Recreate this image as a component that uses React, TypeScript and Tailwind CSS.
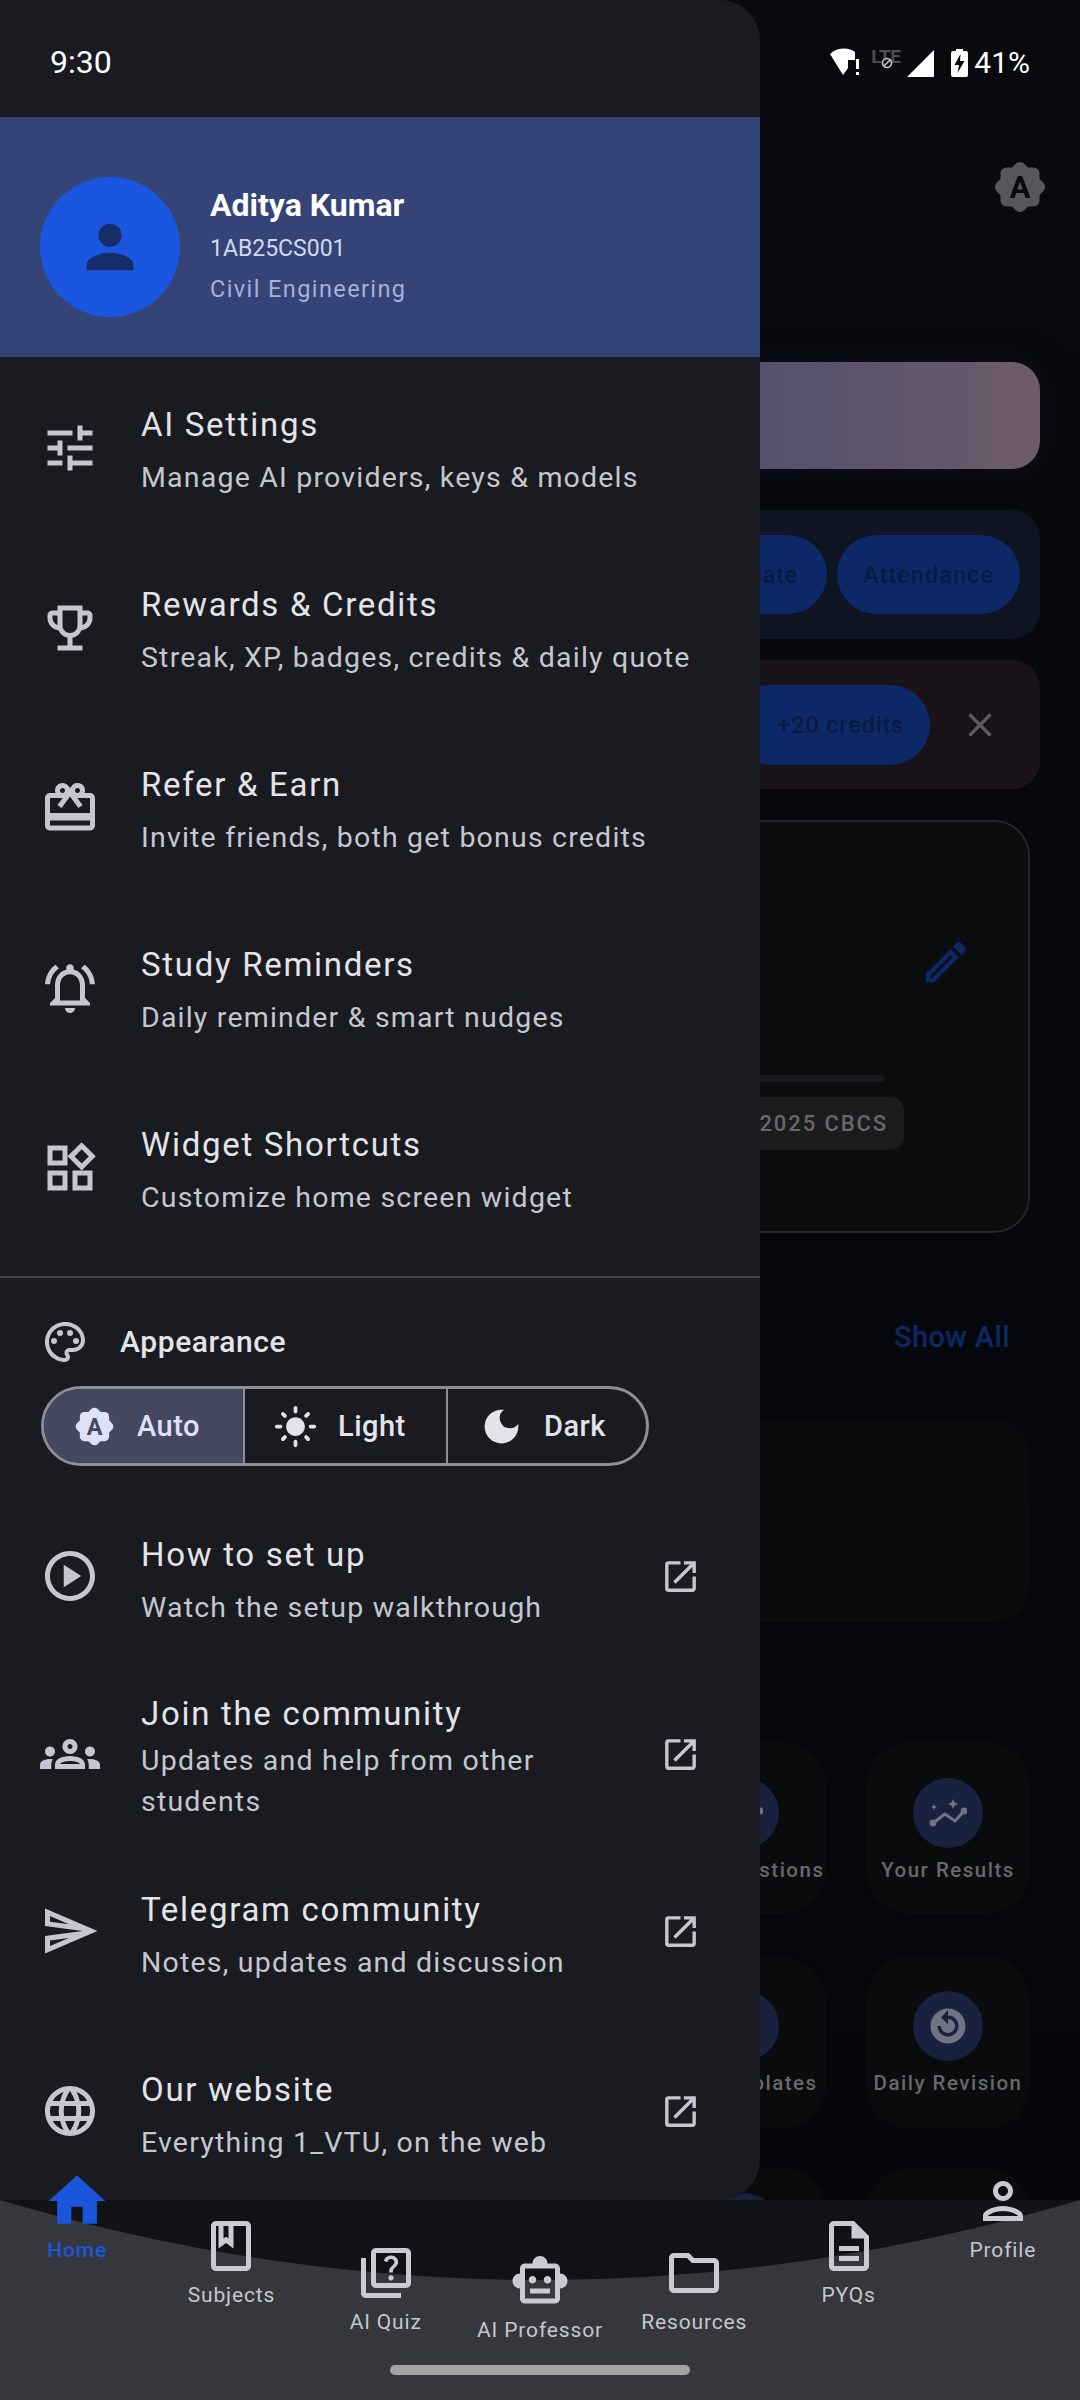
import React from "react";
import {
  MdTune, MdOutlineEmojiEvents, MdOutlineRedeem, MdOutlineNotificationsActive, MdOutlineWidgets,
  MdOutlinePalette, MdLightMode, MdDarkMode, MdOutlinePlayCircle, MdOutlineGroups,
  MdOutlineSend, MdLanguage, MdOpenInNew, MdPerson, MdHome, MdOutlineBook, MdOutlineQuiz,
  MdOutlineSmartToy, MdOutlineFolder, MdOutlineDescription, MdOutlinePerson,
  MdReplayCircleFilled, MdOutlineEdit, MdClose,
} from "react-icons/md";

type IconT = React.ComponentType<{ size?: number; className?: string }>;

function AutoBadge({ size, letter, className = "" }: { size: number; letter: string; className?: string }) {
  return (
    <svg width={size} height={size} viewBox="0 0 24 24" className={`shrink-0 ${className}`}>
      <rect x="4.2" y="4.2" width="15.6" height="15.6" rx="2.4" fill="currentColor" />
      <rect x="4.2" y="4.2" width="15.6" height="15.6" rx="2.4" fill="currentColor" transform="rotate(45 12 12)" />
      <text x="12" y="16.4" textAnchor="middle" fontSize="12.5" fontWeight="700" fontFamily="Roboto, sans-serif" fill={letter}>A</text>
    </svg>
  );
}

function ResultsGlyph() {
  return (
    <svg width="38" height="28" viewBox="0 0 38 28" className="text-[#6f7382]">
      <path d="M4 24 L16 15 L26 22 L35 12" fill="none" stroke="currentColor" strokeWidth="3" strokeLinejoin="round" />
      <circle cx="4" cy="24" r="3.4" fill="currentColor" />
      <circle cx="35" cy="12" r="3.4" fill="currentColor" />
      <path d="M24 0 L25.6 3.4 L29 5 L25.6 6.6 L24 10 L22.4 6.6 L19 5 L22.4 3.4 Z" fill="currentColor" />
      <path d="M5 5 L5.9 7.1 L8 8 L5.9 8.9 L5 11 L4.1 8.9 L2 8 L4.1 7.1 Z" fill="currentColor" />
    </svg>
  );
}

function Row({ icon: Icon, title, sub, h = "h-[180px]", ext, iconShift = "", gap = "mt-[8px]", textShift = "" }: { icon: IconT; title: string; sub: string; h?: string; ext?: boolean; iconShift?: string; gap?: string; textShift?: string }) {
  return (
    <div className={`flex shrink-0 items-center pl-[40px] ${h}`}>
      <Icon size={60} className={`shrink-0 text-[#c5c6d2] ${iconShift}`} />
      <div className={`ml-[41px] shrink-0 ${textShift} ${ext ? "w-[500px]" : "w-[600px]"}`}>
        <div className="text-[33px] leading-[48px] tracking-[1.7px] text-[#e3e3e9]">{title}</div>
        <div className={`text-[28.5px] leading-[41px] tracking-[1.2px] text-[#c5c6d0] ${gap}`}>{sub}</div>
      </div>
      {ext && <MdOpenInNew size={41} className={`ml-[19px] shrink-0 text-[#c5c6d2] ${iconShift}`} />}
    </div>
  );
}

function Seg({ icon, label, w, active, last, pl }: { icon: React.ReactNode; label: string; w: string; active?: boolean; last?: boolean; pl: string }) {
  return (
    <div className={`flex items-center gap-[20px] ${pl} ${w} ${active ? "bg-[#444960] text-[#dfe1f9]" : "text-[#e3e3ec]"} ${last ? "" : "border-r-[2px] border-[#8e8e94]"}`}>
      {icon}
      <span className="text-[29px] font-medium leading-[40px] tracking-[0.5px]">{label}</span>
    </div>
  );
}

function Tile({ icon, label, top = "pt-[36px]", className = "" }: { icon?: React.ReactNode; label?: string; top?: string; className?: string }) {
  return (
    <div className={`flex h-[172px] w-[164px] flex-col items-center rounded-[44px] bg-[#0a0b0d] ${top} ${className}`}>
      <div className="flex h-[70px] w-[70px] shrink-0 items-center justify-center rounded-full bg-[#18213d]">{icon}</div>
      {label && <div className="mt-[7px] whitespace-nowrap text-[20.5px] font-medium leading-[30px] tracking-[1.5px] text-[#68686b]">{label}</div>}
    </div>
  );
}

function NavItem({ icon: Icon, label, offset, active, size = 60 }: { icon: IconT; label: string; offset: string; active?: boolean; size?: number }) {
  return (
    <div className={`flex flex-col items-center ${offset}`}>
      <div className={`flex h-[60px] w-[60px] items-center justify-center ${active ? "text-[#1a56db]" : "text-[#c9cad6]"}`}>
        <Icon size={size} className="shrink-0" />
      </div>
      <div className={`mt-[4px] whitespace-nowrap text-[21px] leading-[30px] tracking-[0.85px] ${active ? "font-medium text-[#1a56db]" : "text-[#c5c6d0]"}`}>{label}</div>
    </div>
  );
}

function StatusIcons() {
  return (
    <div className="flex items-center">
      <svg width="30" height="30" viewBox="0 0 30 30">
        <path d="M0 6 C7 -1 19 -1 25 4 L25 12 L18 12 L18 20 L13 27 Z" fill="#fff" />
        <rect x="26" y="11" width="3" height="10" fill="#fff" />
        <rect x="26" y="24" width="3" height="3" fill="#fff" />
      </svg>
      <div className="relative mb-[12px] ml-[11px] h-[16px] w-[30px]">
        <span className="block text-[19px] font-bold leading-[16px] tracking-[-0.5px] text-[#4d4d4f]">LTE</span>
        <svg width="12" height="12" viewBox="0 0 12 12" className="absolute left-[10px] top-[8px]">
          <circle cx="6" cy="6" r="4.5" fill="#0a0b0e" stroke="#c9c9c9" strokeWidth="1.6" />
          <path d="M3 9 L9 3" stroke="#c9c9c9" strokeWidth="1.6" />
        </svg>
      </div>
      <svg width="27" height="27" viewBox="0 0 27 27" className="ml-[6px]">
        <path d="M27 0 V27 H0 Z" fill="#fff" />
      </svg>
      <svg width="17" height="28" viewBox="0 0 17 28" className="ml-[17px]">
        <path d="M5 0 H12 V2 H15 Q17 2 17 4 V26 Q17 28 15 28 H2 Q0 28 0 26 V4 Q0 2 2 2 H5 Z" fill="#fff" />
        <path d="M9.5 5 L3.5 16 H8 L6.5 24 L13.5 12 H9 Z" fill="#0a0b0e" />
      </svg>
      <span className="ml-[6px] text-[30px] leading-[36px] text-white">41%</span>
    </div>
  );
}

export default function App() {
  return (
    <div className="relative h-[2400px] w-[1080px] overflow-hidden bg-[#07080b] font-[Roboto,sans-serif]">
      <main className="relative h-[2200px] overflow-hidden">
        {/* dimmed page behind the drawer */}
        <div className="flex h-[2200px] flex-col bg-gradient-to-b from-[#090a0d] to-[#050609]">
          <div className="flex h-[362px] shrink-0 justify-end pr-[30px] pt-[157px]">
            <AutoBadge size={60} letter="#08090c" className="text-[#57575b]" />
          </div>
          <div className="mx-[40px] h-[107px] shrink-0 rounded-[28px] bg-gradient-to-r from-[#10306e] to-[#6d5b6b] shadow-[0_0_30px_rgba(20,30,70,0.35)]" />
          <div className="mx-[40px] mt-[41px] flex h-[129px] shrink-0 items-center justify-end gap-[10px] rounded-[28px] bg-[#0f1422] pr-[20px]">
            <div className="flex h-[79px] w-[220px] items-center justify-end rounded-full bg-[#0d2866] pr-[29px] text-[24px] font-medium tracking-[0.6px] text-[#0a1a42]">Update</div>
            <div className="flex h-[79px] w-[183px] items-center justify-center rounded-full bg-[#0d2866] text-[24px] font-medium tracking-[0.8px] text-[#0a1a42]">Attendance</div>
          </div>
          <div className="mx-[40px] mt-[21px] flex h-[129px] shrink-0 items-center justify-end rounded-[28px] bg-[#1a1219] pr-[40px]">
            <div className="flex h-[80px] w-[200px] items-center justify-end rounded-full bg-[#0d2866] pr-[26px] text-[24px] font-medium tracking-[0.6px] text-[#0a1a42]">+20 credits</div>
            <MdClose size={40} className="ml-[30px] text-[#5c5c60]" />
          </div>
          <div className="mx-[50px] mt-[31px] flex h-[413px] shrink-0 flex-col rounded-[36px] border-[2px] border-[#232427] bg-[#0b0c0e] pl-[300px]">
            <div className="mt-[113px] flex justify-end pr-[55px]">
              <MdOutlineEdit size={54} className="text-[#0d2866]" />
            </div>
            <div className="mt-[86px] h-[7px] w-[533px] rounded-full bg-[#17181b]" />
            <div className="mt-[15px] flex h-[53px] w-[552px] items-center justify-end rounded-[14px] bg-[#1a1b1d] pr-[16px] text-[22px] font-medium tracking-[1.9px] text-[#68686b]">2025 CBCS</div>
          </div>
          <div className="mt-[84px] flex h-[40px] shrink-0 justify-end pr-[70px] text-[29px] font-medium leading-[40px] tracking-[0.4px] text-[#0d2866]">Show All</div>
          <div className="mx-[50px] mt-[63px] h-[202px] shrink-0 rounded-[36px] bg-[#0a0b0d]" />
          <div className="mt-[120px] grid shrink-0 grid-cols-[164px_164px] justify-end gap-x-[40px] gap-y-[43px] pr-[50px]">
            <Tile icon={<ResultsGlyph />} label="Your Questions" />
            <Tile icon={<ResultsGlyph />} label="Your Results" />
            <Tile icon={<MdOutlineDescription size={42} className="text-[#6f7382]" />} label="My Templates" top="pt-[34px]" />
            <Tile icon={<MdReplayCircleFilled size={42} className="text-[#6f7382]" />} label="Daily Revision" top="pt-[34px]" />
            <Tile top="pt-[25px]" className="-mt-[4px]" />
            <Tile top="pt-[44px]" className="-mt-[4px]" />
          </div>
        </div>

        {/* navigation drawer */}
        <aside className="absolute left-0 top-0 flex h-[2200px] w-[760px] flex-col overflow-hidden rounded-r-[40px] bg-[#1a1b21]">
          <div className="flex h-[117px] shrink-0 items-center pl-[50px] pt-[7px] text-[32px] leading-[36px] text-white">9:30</div>
          <div className="flex h-[240px] shrink-0 items-center bg-[#354477] pl-[40px] pt-[20px]">
            <div className="flex h-[140px] w-[140px] shrink-0 items-center justify-center rounded-full bg-[#1a56e0]">
              <MdPerson size={70} className="text-[#172c68]" />
            </div>
            <div className="-mt-[3px] ml-[30px]">
              <div className="text-[32px] font-bold leading-[40px] text-white">Aditya Kumar</div>
              <div className="mt-[6px] text-[23px] leading-[36px] text-[#d3d8f0]">1AB25CS001</div>
              <div className="mt-[4px] text-[23.5px] leading-[36px] tracking-[1.4px] text-[#a7b0dc]">Civil Engineering</div>
            </div>
          </div>
          <div className="h-[1px] shrink-0" />
          <Row icon={MdTune} title="AI Settings" sub="Manage AI providers, keys & models" textShift="mt-[3px]" />
          <Row icon={MdOutlineEmojiEvents} title="Rewards & Credits" sub="Streak, XP, badges, credits & daily quote" textShift="mt-[3px]" />
          <Row icon={MdOutlineRedeem} title="Refer & Earn" sub="Invite friends, both get bonus credits" textShift="mt-[3px]" />
          <Row icon={MdOutlineNotificationsActive} title="Study Reminders" sub="Daily reminder & smart nudges" textShift="mt-[3px]" />
          <Row icon={MdOutlineWidgets} title="Widget Shortcuts" sub="Customize home screen widget" textShift="mt-[3px]" />
          <div className="mt-[18px] h-[2px] shrink-0 bg-[#44454c]" />
          <div className="mt-[40px] flex h-[48px] shrink-0 items-center pl-[41px]">
            <MdOutlinePalette size={48} className="text-[#c5c6d2]" />
            <span className="ml-[31px] text-[30px] font-medium leading-[40px] tracking-[0.6px] text-[#e3e3e9]">Appearance</span>
          </div>
          <div className="ml-[41px] mt-[20px] flex h-[80px] w-[608px] shrink-0 overflow-hidden rounded-full border-[3px] border-[#8e8e94]">
            <Seg icon={<AutoBadge size={45} letter="#444960" />} label="Auto" w="w-[201px]" pl="pl-[28px]" active />
            <Seg icon={<MdLightMode size={45} className="shrink-0" />} label="Light" w="w-[203px]" pl="pl-[28px]" />
            <Seg icon={<MdDarkMode size={45} className="shrink-0" />} label="Dark" w="flex-1" pl="pl-[31px]" last />
          </div>
          <div className="h-[28px] shrink-0" />
          <Row icon={MdOutlinePlayCircle} title="How to set up" sub="Watch the setup walkthrough" h="h-[170px]" ext iconShift="-mt-[6px]" />
          <Row icon={MdOutlineGroups} title="Join the community" sub="Updates and help from other students" h="h-[180px]" ext gap="mt-[2px]" textShift="mt-[3px]" />
          <Row icon={MdOutlineSend} title="Telegram community" sub="Notes, updates and discussion" h="h-[180px]" ext iconShift="-mt-[6px]" />
          <Row icon={MdLanguage} title="Our website" sub="Everything 1_VTU, on the web" h="h-[180px]" ext iconShift="-mt-[6px]" />
        </aside>

        <div className="absolute right-[50px] top-[45px]">
          <StatusIcons />
        </div>
      </main>

      {/* bottom navigation */}
      <nav className="relative h-[200px] bg-[#111216]">
        <svg width="1080" height="200" viewBox="0 0 1080 200" className="absolute inset-0">
          <path d="M0 0 Q540 160 1080 0 L1080 200 L0 200 Z" fill="#36363d" />
        </svg>
        <div className="relative grid grid-cols-7">
          <NavItem icon={MdHome} label="Home" offset="-mt-[29px]" active size={68} />
          <NavItem icon={MdOutlineBook} label="Subjects" offset="mt-[16px]" />
          <NavItem icon={MdOutlineQuiz} label="AI Quiz" offset="mt-[43px]" />
          <NavItem icon={MdOutlineSmartToy} label="AI Professor" offset="mt-[51px]" />
          <NavItem icon={MdOutlineFolder} label="Resources" offset="mt-[43px]" />
          <NavItem icon={MdOutlineDescription} label="PYQs" offset="mt-[16px]" />
          <NavItem icon={MdOutlinePerson} label="Profile" offset="-mt-[29px]" />
        </div>
        <div className="absolute bottom-[25px] left-[390px] h-[10px] w-[300px] rounded-full bg-[#a3a3a4]" />
      </nav>
    </div>
  );
}
